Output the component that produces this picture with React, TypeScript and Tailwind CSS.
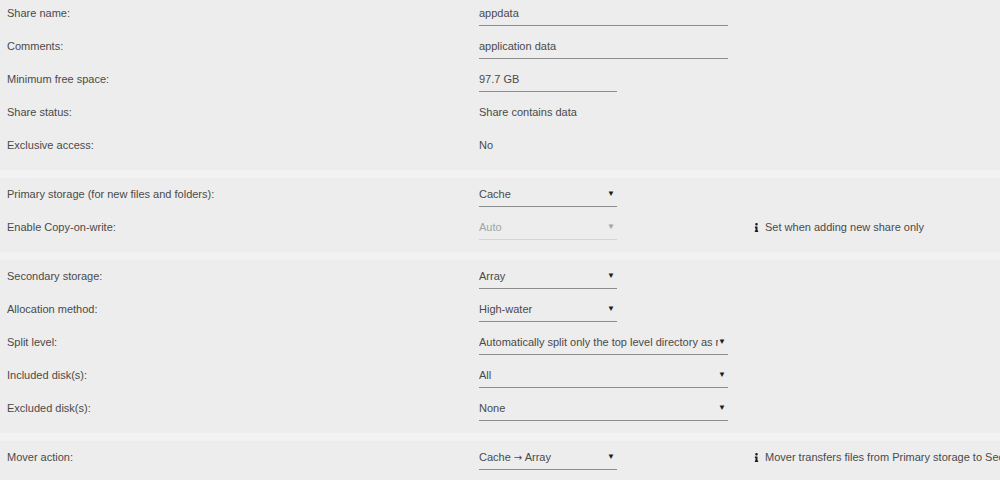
import { FaInfo } from "react-icons/fa";

type Field =
  | { kind: "text"; value: string; wide?: boolean }
  | { kind: "static"; value: string }
  | { kind: "select"; value: string; wide?: boolean; disabled?: boolean };

type Row = { label: string; field: Field; info?: string };

const sections: Row[][] = [
  [
    { label: "Share name:", field: { kind: "text", value: "appdata", wide: true } },
    { label: "Comments:", field: { kind: "text", value: "application data", wide: true } },
    { label: "Minimum free space:", field: { kind: "text", value: "97.7 GB" } },
    { label: "Share status:", field: { kind: "static", value: "Share contains data" } },
    { label: "Exclusive access:", field: { kind: "static", value: "No" } },
  ],
  [
    {
      label: "Primary storage (for new files and folders):",
      field: { kind: "select", value: "Cache" },
    },
    {
      label: "Enable Copy-on-write:",
      field: { kind: "select", value: "Auto", disabled: true },
      info: "Set when adding new share only",
    },
  ],
  [
    { label: "Secondary storage:", field: { kind: "select", value: "Array" } },
    { label: "Allocation method:", field: { kind: "select", value: "High-water" } },
    {
      label: "Split level:",
      field: {
        kind: "select",
        value: "Automatically split only the top level directory as required",
        wide: true,
      },
    },
    { label: "Included disk(s):", field: { kind: "select", value: "All", wide: true } },
    { label: "Excluded disk(s):", field: { kind: "select", value: "None", wide: true } },
  ],
  [
    {
      label: "Mover action:",
      field: { kind: "select", value: "Cache \u2192 Array" },
      info: "Mover transfers files from Primary storage to Secondary storage",
    },
  ],
];

// the arrow glyph in option text renders better in DejaVu
function optionText(value: string) {
  const parts = value.split("\u2192");
  if (parts.length === 1) return value;
  return (
    <>
      {parts[0]}
      <span style={{ fontFamily: '"DejaVu Sans", sans-serif' }} className="text-[10px]">
        {"\u2192"}
      </span>
      {parts[1]}
    </>
  );
}

function FieldView({ field }: { field: Field }) {
  if (field.kind === "static") {
    return <span>{field.value}</span>;
  }

  const width = field.wide ? "w-[249px]" : "w-[138px]";

  if (field.kind === "text") {
    return (
      <div className={`${width} h-[24px] flex items-center border-b border-[#8c8c8c]`}>
        {field.value}
      </div>
    );
  }

  return (
    <div
      className={`${width} h-[24px] flex items-center border-b ${
        field.disabled ? "border-[#d4d4d4] text-[#a3a3a3]" : "border-[#8c8c8c]"
      }`}
    >
      <span className="flex-1 overflow-hidden whitespace-nowrap">{optionText(field.value)}</span>
      <span
        className={`text-[8px] pr-[2px] ${field.disabled ? "text-[#a3a3a3]" : "text-[#1c1c1c]"}`}
      >
        ▼
      </span>
    </div>
  );
}

export default function App() {
  return (
    <div
      className="h-[480px] w-[1000px] overflow-hidden bg-[#f2f2f2] text-[11px] text-[#4a4a4a]"
      style={{ fontFamily: '"Liberation Sans", Arial, sans-serif' }}
    >
      <div className="-mt-[3px] flex flex-col gap-2">
        {sections.map((rows, i) => (
          <div key={i} className="bg-[#ededed] pb-2">
            {rows.map((row) => (
              <div key={row.label} className="flex h-[33px] items-center">
                <div className="w-[479px] shrink-0 pl-[7px]">{row.label}</div>
                <div className="w-[272px] shrink-0">
                  <FieldView field={row.field} />
                </div>
                {row.info && (
                  <div className="flex items-center gap-[4px] whitespace-nowrap pl-[1px]">
                    <FaInfo className="h-[9px] w-[9px] text-[#1c1c1c]" />
                    <span>{row.info}</span>
                  </div>
                )}
              </div>
            ))}
          </div>
        ))}
      </div>
    </div>
  );
}
